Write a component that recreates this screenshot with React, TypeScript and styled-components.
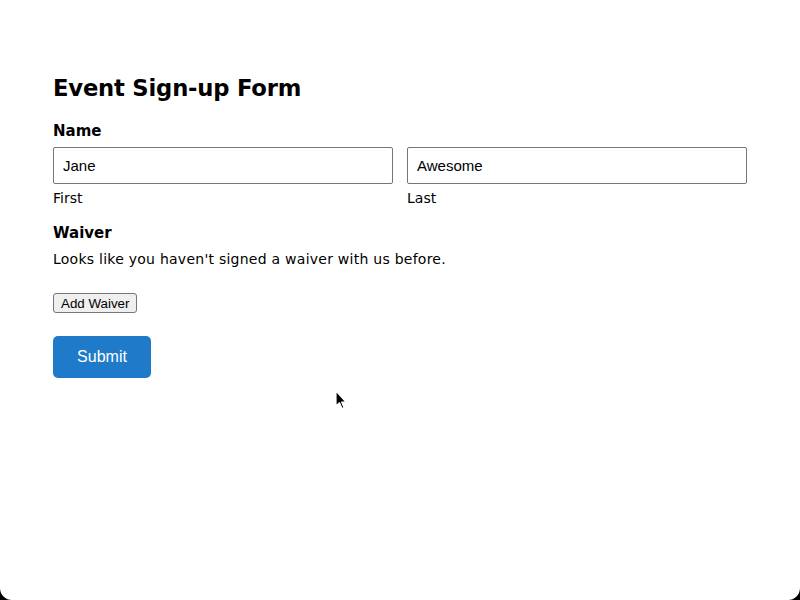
import styled, { createGlobalStyle } from "styled-components";

const GlobalStyle = createGlobalStyle`
  html, body {
    margin: 0;
    padding: 0;
    background: #000;
  }
`;

const Page = styled.div`
  position: relative;
  width: 800px;
  height: 600px;
  background: #fff;
  border-radius: 0 0 12px 12px;
  overflow: hidden;
  box-sizing: border-box;
  padding: 71px 53px 0 53px;
  font-family: "DejaVu Sans", "Noto Sans", sans-serif;
  color: #000;
`;

const Heading = styled.h1`
  margin: 0 0 16px 0;
  font-size: 22.7px;
  line-height: 34px;
  font-weight: bold;
  letter-spacing: -0.2px;
`;

const SectionTitle = styled.div`
  font-size: 15px;
  line-height: 20px;
  font-weight: bold;
  margin-bottom: 6px;
`;

const NameRow = styled.div`
  display: grid;
  grid-template-columns: 1fr 1fr;
  column-gap: 14px;
  margin-bottom: 16px;
`;

const Field = styled.div`
  display: flex;
  flex-direction: column;
  gap: 5px;
`;

const TextInput = styled.input`
  box-sizing: border-box;
  height: 37px;
  width: 100%;
  padding: 0 9px;
  border: 1px solid #767676;
  border-radius: 2px;
  font-family: "Liberation Sans", Arial, sans-serif;
  font-size: 15px;
  color: #000;
  outline: none;
`;

const Hint = styled.span`
  font-size: 14px;
  line-height: 18px;
`;

const Text = styled.p`
  margin: 0 0 24px 0;
  font-size: 14px;
  line-height: 20px;
  letter-spacing: 0.25px;
`;

const PlainButton = styled.button`
  display: block;
  height: 20px;
  padding: 0 7px;
  border: 1px solid #767676;
  border-radius: 3px;
  background: #efefef;
  font-family: "Liberation Sans", Arial, sans-serif;
  font-size: 13.33px;
  color: #000;
  margin-bottom: 23px;
`;

const SubmitButton = styled.button`
  display: block;
  width: 98px;
  height: 42px;
  border: none;
  border-radius: 5px;
  background: #1f7bc9;
  color: #fff;
  font-family: "Liberation Sans", Arial, sans-serif;
  font-size: 16px;
`;

const Cursor = styled.svg`
  position: absolute;
  left: 333px;
  top: 389px;
`;

export default function App() {
  return (
    <>
      <GlobalStyle />
      <Page>
        <Heading>Event Sign-up Form</Heading>
        <SectionTitle>Name</SectionTitle>
        <NameRow>
          <Field>
            <TextInput defaultValue="Jane" />
            <Hint>First</Hint>
          </Field>
          <Field>
            <TextInput defaultValue="Awesome" />
            <Hint>Last</Hint>
          </Field>
        </NameRow>
        <SectionTitle>Waiver</SectionTitle>
        <Text>Looks like you haven't signed a waiver with us before.</Text>
        <PlainButton>Add Waiver</PlainButton>
        <SubmitButton>Submit</SubmitButton>
        <Cursor width="16" height="24" viewBox="0 0 16 24">
          <path d="M3 2 L3 17 L6.5 13.8 L9 19.5 L11 18.6 L8.6 13 L13 13 Z" fill="#000" stroke="#fff" strokeWidth="1.2" strokeLinejoin="round" />
        </Cursor>
      </Page>
    </>
  );
}
